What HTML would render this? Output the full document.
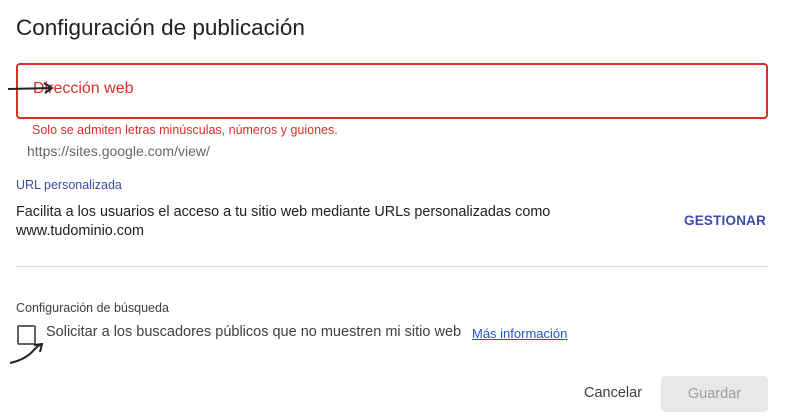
<!DOCTYPE html>
<html><head><meta charset="utf-8"><style>
body{margin:0;width:785px;height:420px;background:#fff;font-family:"Liberation Sans",sans-serif;position:relative;overflow:hidden;color:#202124}
.a{position:absolute;white-space:nowrap}
</style></head><body>
<div class="a" style="left:16px;top:15px;font-size:22.5px;color:#202124">Configuración de publicación</div>
<div class="a" style="left:16px;top:63px;width:748px;height:52px;border:2px solid #d93025;border-radius:4px"></div>
<div class="a" style="left:33px;top:80px;font-size:16px;color:#d93025">Dirección web</div>
<svg class="a" style="left:6px;top:81px" width="50" height="14"><path d="M2 8 L46 7 M38 2 L46 7 L39 12" stroke="#222" stroke-width="2" fill="none"/></svg>
<div class="a" style="left:32px;top:123px;font-size:12.5px;color:#d93025">Solo se admiten letras minúsculas, números y guiones.</div>
<div class="a" style="left:27px;top:143px;font-size:14px;color:#666">https://sites.google.com/view/</div>
<div class="a" style="left:16px;top:178px;font-size:12.5px;color:#3b4ba8">URL personalizada</div>
<div class="a" style="left:16px;top:203px;font-size:14.4px;line-height:19px;color:#202124">Facilita a los usuarios el acceso a tu sitio web mediante URLs personalizadas como<br>www.tudominio.com</div>
<div class="a" style="left:684px;top:213px;font-size:13.5px;font-weight:bold;color:#3b4ba8;letter-spacing:.2px">GESTIONAR</div>
<div class="a" style="left:16px;top:266px;width:752px;height:1px;background:#dadce0"></div>
<div class="a" style="left:16px;top:301px;font-size:12.5px;color:#3c4043">Configuración de búsqueda</div>
<div class="a" style="left:17px;top:325px;width:15px;height:16px;border:2px solid #5f6368;border-radius:2px"></div>
<svg class="a" style="left:6px;top:340px" width="50" height="26"><path d="M4 23 Q18 20 26 12 Q32 5 36 4 M28 5 L36 4 L34 12" stroke="#222" stroke-width="2" fill="none"/></svg>
<div class="a" style="left:46px;top:324px;font-size:14.5px;color:#3c4043">Solicitar a los buscadores públicos que no muestren mi sitio web</div>
<div class="a" style="left:472px;top:326px;font-size:13px;color:#1a57d6;text-decoration:underline">Más información</div>
<div class="a" style="left:584px;top:385px;font-size:14.5px;color:#3c4043">Cancelar</div>
<div class="a" style="left:661px;top:376px;width:107px;height:36px;background:#e8e8e8;border-radius:4px;font-size:14.5px;color:#9aa0a6;text-align:center;line-height:36px">Guardar</div>
</body></html>
